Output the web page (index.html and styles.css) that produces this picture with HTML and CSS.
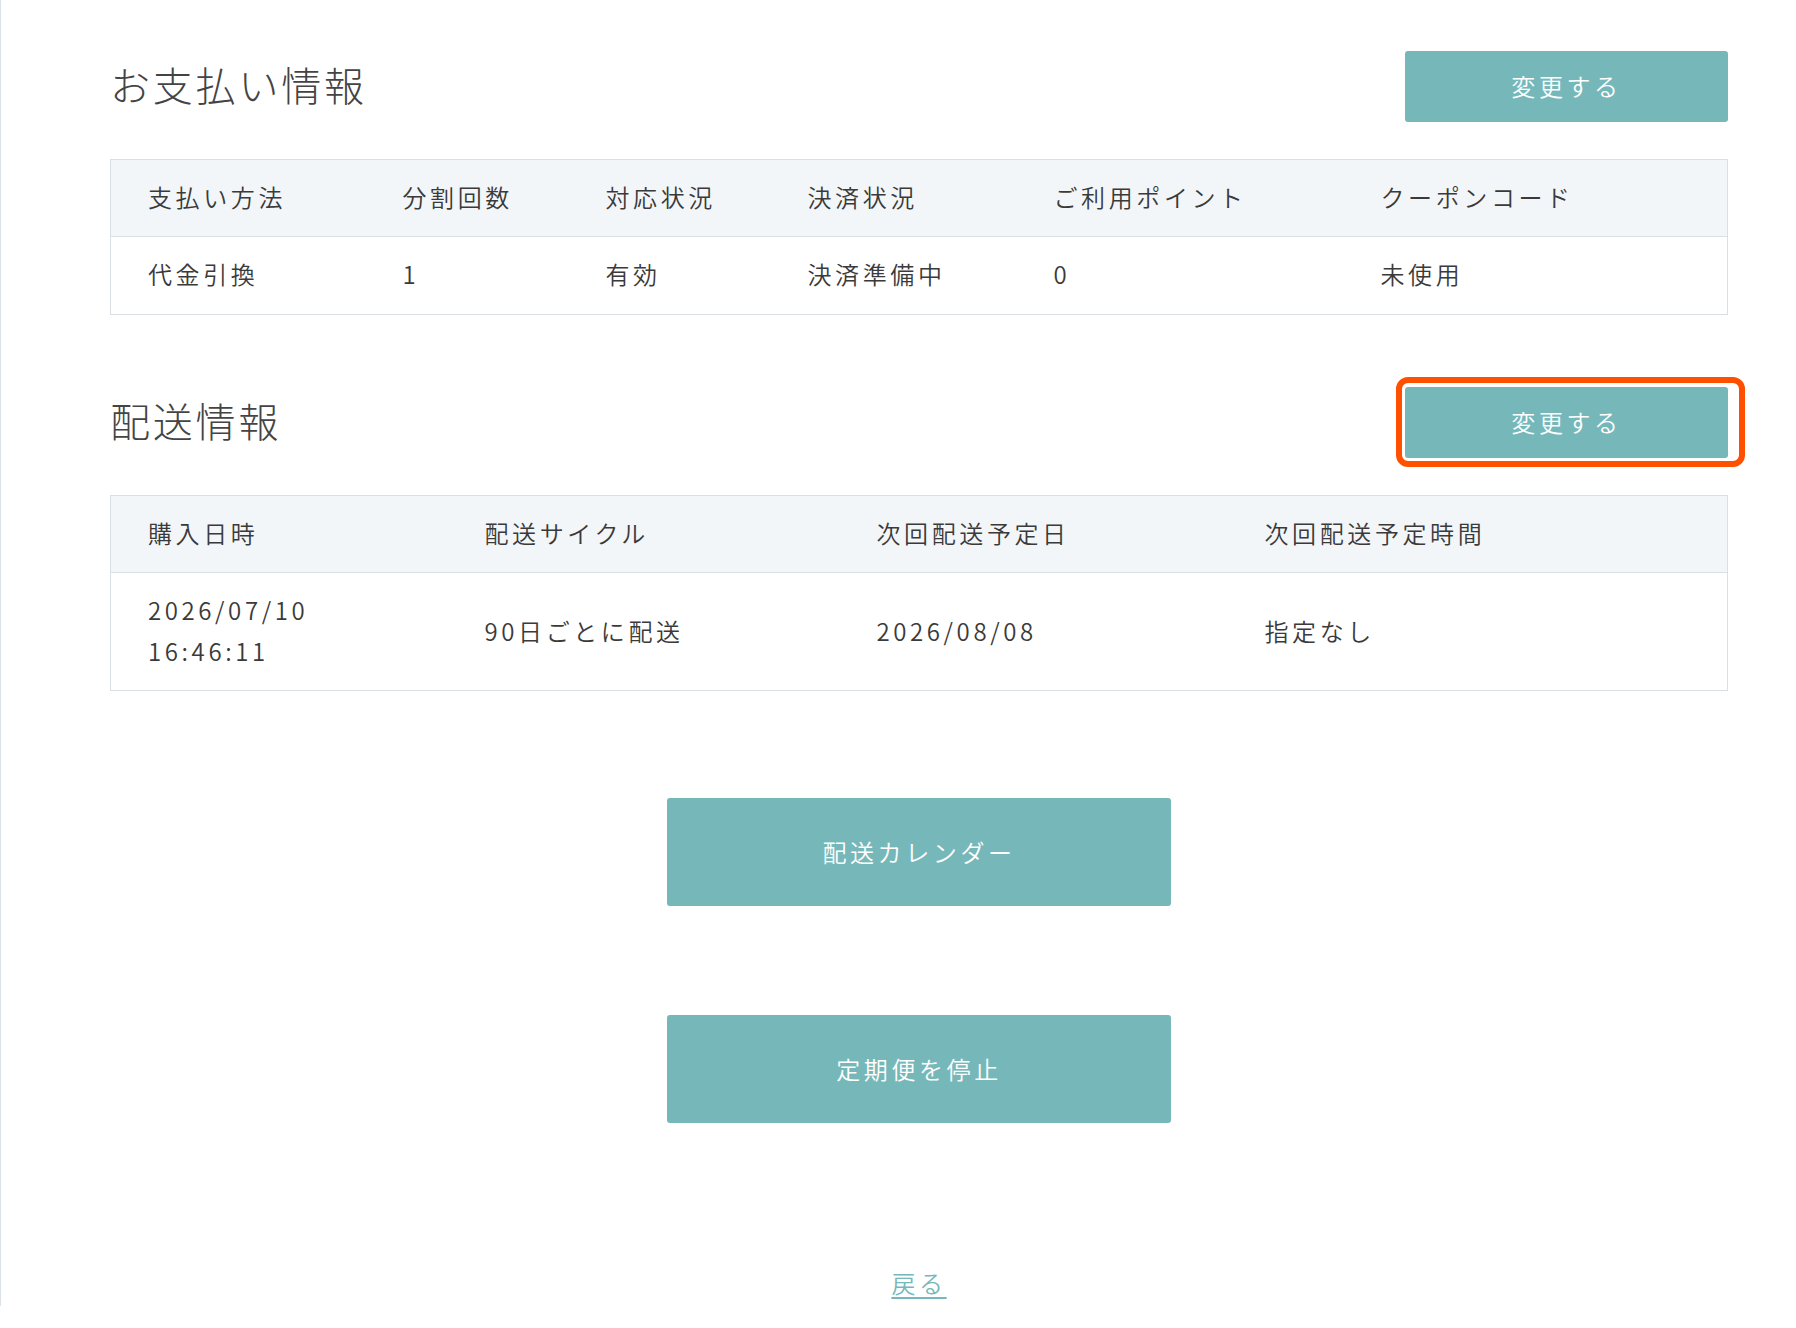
FILE: index.html
```html
<!DOCTYPE html>
<html lang="ja">
  <head>
    <meta charset="UTF-8" />
    <title>定期便詳細</title>
    <meta name="viewport" content="width=device-width, initial-scale=1" />
    <link rel="stylesheet" href="styles.css">
  </head>

  <body>
    <div class="main">
      <!-- お支払い情報 -->
      <div class="section">
        <div class="section-head">
          <h2 class="section-title">お支払い情報</h2>
          <button class="button button-small">変更する</button>
        </div>
        <table class="info-table">
          <colgroup>
            <col class="pay-col1" />
            <col class="pay-col2" />
            <col class="pay-col3" />
            <col class="pay-col4" />
            <col class="pay-col5" />
            <col class="pay-col6" />
          </colgroup>
          <tr>
            <th>支払い方法</th>
            <th>分割回数</th>
            <th>対応状況</th>
            <th>決済状況</th>
            <th>ご利用ポイント</th>
            <th>クーポンコード</th>
          </tr>
          <tr>
            <td>代金引換</td>
            <td>1</td>
            <td>有効</td>
            <td>決済準備中</td>
            <td>0</td>
            <td>未使用</td>
          </tr>
        </table>
      </div>

      <!-- 配送情報 -->
      <div class="section section-ship">
        <div class="section-head">
          <h2 class="section-title">配送情報</h2>
          <span class="marked">
            <button class="button button-small">変更する</button>
          </span>
        </div>
        <table class="info-table ship-table">
          <colgroup>
            <col class="ship-col1" />
            <col class="ship-col2" />
            <col class="ship-col3" />
            <col class="ship-col4" />
          </colgroup>
          <tr>
            <th>購入日時</th>
            <th>配送サイクル</th>
            <th>次回配送予定日</th>
            <th>次回配送予定時間</th>
          </tr>
          <tr>
            <td>2026/07/10<br />16:46:11</td>
            <td>90日ごとに配送</td>
            <td>2026/08/08</td>
            <td>指定なし</td>
          </tr>
        </table>
      </div>

      <div class="actions">
        <button class="button button-large">配送カレンダー</button>
        <button class="button button-large">定期便を停止</button>
      </div>

      <div class="back">
        <a href="#" class="back-link">戻る</a>
      </div>
    </div>
  </body>
</html>
```

FILE: styles.css
```css
body {
  font-family: "Noto Sans CJK JP", "Noto Sans", sans-serif;
  font-weight: 350;
  margin: 0;
  padding: 0;
  color: #3a3a3a;
  background: #fff;
}

.main {
  border-left: 1px solid #dbe1e6;
  height: 1306px;
  box-sizing: border-box;
  padding: 51px 68px 0 109px;
}

.section-head {
  display: flex;
  justify-content: space-between;
  align-items: center;
  margin-bottom: 37px;
}

.section-title {
  font-size: 40px;
  font-weight: 300;
  letter-spacing: 0.07em;
  color: #444;
  margin: 0 0 6px 0;
}

.section-ship {
  margin-top: 72px;
}

.button {
  font-family: inherit;
  font-weight: 350;
  background-color: #76b8b9;
  border: none;
  color: white;
  font-size: 24px;
  letter-spacing: 0.15em;
  border-radius: 3px;
  cursor: pointer;
  padding: 0 0 2px;
}

.button-small {
  width: 323px;
  height: 71px;
  display: block;
}

/* annotation frame around the second button */
.marked {
  position: relative;
  display: block;
}

.marked::after {
  content: "";
  position: absolute;
  left: -9px;
  right: -17px;
  top: -10px;
  bottom: -9px;
  border: 6px solid #ff5000;
  border-radius: 12px;
  pointer-events: none;
}

.info-table {
  width: 100%;
  border-collapse: collapse;
  border: 1px solid #dadfe4;
  table-layout: fixed;
}

th,
td {
  text-align: left;
  font-size: 24px;
  font-weight: 350;
  letter-spacing: 0.15em;
  line-height: 41px;
  padding: 16px 10px 20px 37px;
  color: #3a3a3a;
}

th {
  padding-bottom: 19px;
  background-color: #f3f6f9;
  border-bottom: 1px solid #dadfe4;
}

.ship-table td {
  padding-bottom: 19px;
}

.pay-col1 { width: 255px; }
.pay-col2 { width: 203px; }
.pay-col3 { width: 202px; }
.pay-col4 { width: 246px; }
.pay-col5 { width: 327px; }

.ship-col1 { width: 337px; }
.ship-col2 { width: 392px; }
.ship-col3 { width: 388px; }

.actions {
  display: flex;
  flex-direction: column;
  align-items: center;
  gap: 109px;
  margin-top: 107px;
}

.button-large {
  width: 504px;
  height: 108px;
}

.back {
  text-align: center;
  margin-top: 142px;
}

.back-link {
  font-size: 24px;
  letter-spacing: 0.15em;
  color: #76b8b9;
  text-decoration: underline;
  text-underline-offset: 4px;
}
```
